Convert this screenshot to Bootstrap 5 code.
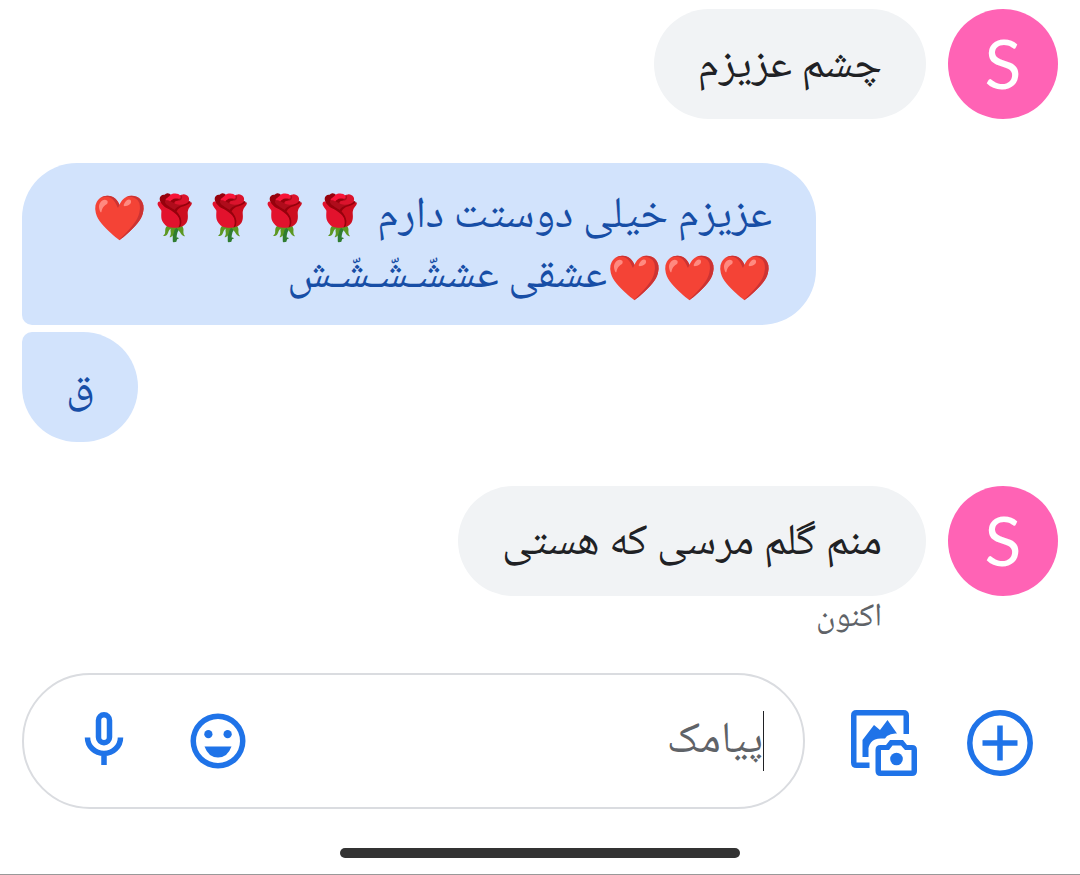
<!DOCTYPE html>
<html lang="fa" dir="rtl">
<head>
<meta charset="utf-8">
<meta name="viewport" content="width=device-width, initial-scale=1">
<title>پیامک</title>
<link rel="stylesheet" href="https://cdn.jsdelivr.net/npm/bootstrap@5.3.0/dist/css/bootstrap.min.css">
<style>
  :root { --ink: #202124; --accent: #1f73e8; }
  body { font-family: "Noto Naskh Arabic UI", "Noto Naskh Arabic", "DejaVu Sans", sans-serif; font-size: 44px; line-height: 60px; color: var(--ink); background: #fff; }
  .thread { padding: 9px 22px 0; gap: 44px; }
  .incoming { gap: 22px; }
  .avatar { width: 110px; height: 110px; background: #ff63b5; color: #fff; font: 68px/108px "Lato", sans-serif; }
  .bubble { min-height: 110px; padding: 23px 44px 19px; border-radius: 55px; background: #f1f3f5; }
  .outgoing { gap: 7px; }
  .outgoing .bubble { background: #d2e3fc; color: #174ea6; max-width: 794px; }
  .outgoing .bubble:first-child { border-bottom-left-radius: 10px; }
  .outgoing .bubble:last-child { border-top-left-radius: 10px; }
  .stamp { font-size: 33px; line-height: 44px; color: #5f6368; padding-right: 176px; }
  .composer { padding: 33px 22px 39px; }
  .field-pill { height: 136px; border: 2px solid #dadce0; border-radius: 68px; padding: 0 39px 0 60px; }
  .field-pill input { font-size: 44px; line-height: 60px; color: var(--ink); padding: 0; }
  .field-pill input::placeholder { color: #5f6368; opacity: 1; }
  .caret { width: 1px; height: 60px; background: var(--ink); }
  .tool { padding: 0; line-height: 0; color: var(--accent); }
  .outer-tools { gap: 50px; padding: 4px 25px 0 46px; }
  .inner-tools { gap: 61px; }
  .home-bar { width: 37%; height: 10px; background: #333; }
  .screen-end { padding-bottom: 16px; border-bottom: 1px solid #999; }
</style>
</head>
<body class="d-flex flex-column min-vh-100">
<main class="thread d-flex flex-column">
  <section class="incoming d-flex align-items-start">
    <div class="avatar rounded-circle text-center flex-shrink-0">S</div>
    <div class="bubble d-flex align-items-center">چشم عزیزم</div>
  </section>

  <section class="outgoing d-flex flex-column align-items-end">
    <div class="bubble">عزیزم خیلی دوستت دارم 🌹🌹🌹🌹❤️❤️❤️❤️عشقی عششّـشّـشّـش</div>
    <div class="bubble d-flex align-items-center">ق</div>
  </section>

  <section>
    <div class="incoming d-flex align-items-start">
      <div class="avatar rounded-circle text-center flex-shrink-0">S</div>
      <div class="bubble d-flex align-items-center">منم گلم مرسی که هستی</div>
    </div>
    <div class="stamp">اکنون</div>
  </section>
</main>

<footer class="mt-auto">
  <form class="composer d-flex align-items-center">
    <div class="outer-tools d-flex">
      <button type="button" class="tool btn border-0" aria-label="افزودن">
        <svg width="66" height="66" viewBox="0 0 66 66" fill="none" stroke="currentColor" stroke-width="5.500"><circle cx="33" cy="33" r="30.200"/><path d="M33 15.500v35M15.500 33h35"/></svg>
      </button>
      <button type="button" class="tool btn border-0" aria-label="گالری و دوربین">
        <svg width="66" height="66" viewBox="0 0 66 66" fill="currentColor"><path d="M5.500 0h47q5.500 0 5.500 5.500V24h-5.500V5.500H5.500v47h13V58h-13Q0 58 0 52.500v-47Q0 0 5.500 0z"/><path d="M11.500 47V30L23 15l6 5L36.500 10L46 23.500q-6-.5-10 2.500l-2 2.500h-4q-7 0-10 4t-2.500 7.500v7z"/><path fill-rule="evenodd" d="M39 30h13l4 5h5q5 0 5 5v21q0 5-5 5H29.500q-5 0-5-5V40q0-5 5-5H35zm2.500 5.500L38 40h-8v20.500h30.500V40H54l-4-4.500z"/><circle cx="45.500" cy="49" r="6.300"/></svg>
      </button>
    </div>
    <div class="field-pill d-flex align-items-center flex-grow-1">
      <span class="caret flex-shrink-0"></span>
      <input type="text" class="form-control border-0 shadow-none bg-transparent" placeholder="پیامک" aria-label="پیامک">
      <div class="inner-tools d-flex align-items-center">
        <button type="button" class="tool btn border-0" aria-label="شکلک">
          <svg width="66" height="66" viewBox="0 0 24 24" fill="currentColor"><path fill-rule="evenodd" d="M12 2a10 10 0 1 0 0 20a10 10 0 0 0 0-20zm0 18a8 8 0 1 1 0-16a8 8 0 0 1 0 16z"/><circle cx="8.500" cy="9.500" r="1.500"/><circle cx="15.500" cy="9.500" r="1.500"/><path d="M7.100 14h9.800q-1.400 4-4.900 4t-4.900-4z"/></svg>
        </button>
        <button type="button" class="tool btn border-0" aria-label="پیام صوتی">
          <svg width="40" height="58" viewBox="0 0 40 58" fill="none" stroke="currentColor" stroke-width="5.500"><rect x="14.500" y="2.750" width="11" height="28" rx="5.500"/><path d="M3.500 25.500a16.500 16 0 0 0 33 0M20 42v11"/></svg>
        </button>
      </div>
    </div>
  </form>
  <div class="screen-end"><div class="home-bar rounded-pill mx-auto"></div></div>
</footer>
<script src="https://cdn.jsdelivr.net/npm/bootstrap@5.3.0/dist/js/bootstrap.bundle.min.js"></script>
</body>
</html>
